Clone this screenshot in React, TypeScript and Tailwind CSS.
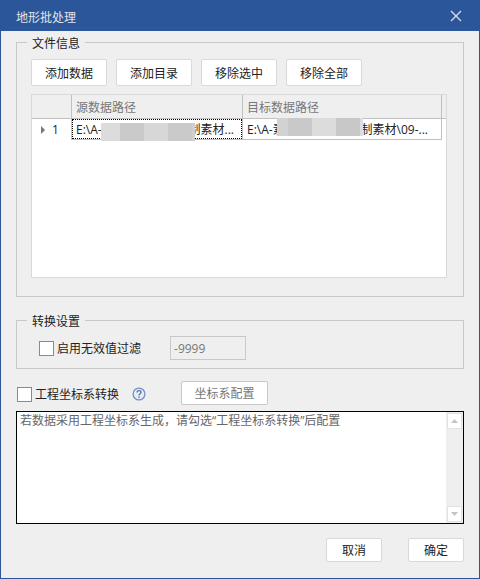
import { useState } from 'react';
import type { ButtonHTMLAttributes, ReactNode } from 'react';
import clsx from 'clsx';

const toolbar = ['添加数据', '添加目录', '移除选中', '移除全部'];

function Button({ className, ...props }: ButtonHTMLAttributes<HTMLButtonElement>) {
  return (
    <button
      type="button"
      className={clsx(
        'rounded-xs border bg-white pt-[2px] text-center hover:bg-gray-50 disabled:text-[#777777]',
        className
      )}
      {...props}
    />
  );
}

function Group({ title, className, children }: { title: string; className?: string; children: ReactNode }) {
  return (
    <fieldset className={clsx('min-w-0 border border-[#c8c8c8]', className)}>
      <legend className="ml-[10px] px-[5px] pt-1">{title}</legend>
      {children}
    </fieldset>
  );
}

function Checkbox({ id, label }: { id: string; label: string }) {
  return (
    <div className="flex items-center gap-[3px]">
      <input
        id={id}
        type="checkbox"
        className="size-[15px] appearance-none border border-[#8a8a8a] bg-white checked:bg-[#2b579a]"
      />
      <label htmlFor={id} className="pt-[2px]">{label}</label>
    </div>
  );
}

function SourceMask() {
  return (
    <span className="absolute top-[3px] left-7 flex h-[18px]">
      <span className="w-[19px] bg-[#dcdcdc]" />
      <span className="w-6 bg-[#cacaca]" />
      <span className="w-6 bg-[#d7d7d7]" />
      <span className="w-6 bg-[#cacaca]" />
      <span className="w-[3px] bg-[#cfcfcf]" />
    </span>
  );
}

function TargetMask() {
  return (
    <span className="absolute -top-px left-[34px] flex h-[18px]">
      <span className="w-[11px] bg-[#d2d2d2]" />
      <span className="w-6 bg-[#c9c9c9]" />
      <span className="w-6 bg-[#dcdcdc]" />
      <span className="w-6 bg-[#c8c8c8]" />
      <span className="w-[3px] bg-[#dddddd]" />
    </span>
  );
}

function PathTable() {
  return (
    <div className="mt-2 h-46 border border-[#d9d9d9] bg-white">
      <table className="w-full table-fixed border-separate border-spacing-0 text-left">
        <thead>
          <tr className="h-6 bg-[#efefef] text-[#777777]">
            <th className="w-10 border-r border-b border-[#c0c0c0] p-0" />
            <th className="w-[171px] border-r border-b border-[#c0c0c0] p-0 pt-[2px] pl-1 font-normal">源数据路径</th>
            <th className="border-r border-b border-[#c0c0c0] p-0 pt-[2px] pl-1 font-normal">目标数据路径</th>
            <th className="w-1 border-b border-[#c0c0c0] p-0" />
          </tr>
        </thead>
        <tbody>
          <tr className="h-[21px]">
            <td className="border-r border-[#c0c0c0] p-0">
              <div className="flex h-5 items-center gap-[6px] pl-2">
                <svg width="6" height="8" viewBox="0 0 6 8" fill="#777777">
                  <path d="M1 0 5 4 1 8z" />
                </svg>
                <span>1</span>
              </div>
            </td>
            <td className="border-r border-b border-[#c0c0c0] p-0">
              <div className="relative flex h-5 items-center justify-between border border-dotted border-black pt-[2px] pr-[7px] pl-[3px]">
                <span>E:\A-</span>
                <span>制素材...</span>
                <SourceMask />
              </div>
            </td>
            <td className="border-r border-b border-[#c0c0c0] p-0">
              <div className="relative flex h-5 items-center justify-between pt-[2px] pr-[13px] pl-1">
                <span>E:\A-素</span>
                <span>制素材\09-...</span>
                <TargetMask />
              </div>
            </td>
            <td className="p-0" />
          </tr>
        </tbody>
      </table>
    </div>
  );
}

function ScrollBar() {
  return (
    <div className="flex w-[17px] flex-col items-center justify-between bg-[#efefef] py-px">
      <button type="button" aria-label="向上" className="flex h-4 w-[15px] items-center justify-center border border-[#e2e2e2] bg-white">
        <svg width="7" height="4" viewBox="0 0 7 4" fill="#c4c4c4">
          <path d="M3.5 0 7 4H0z" />
        </svg>
      </button>
      <button type="button" aria-label="向下" className="flex h-4 w-[15px] items-center justify-center border border-[#e2e2e2] bg-white">
        <svg width="7" height="4" viewBox="0 0 7 4" fill="#c4c4c4">
          <path d="M3.5 4 7 0H0z" />
        </svg>
      </button>
    </div>
  );
}

export default function App() {
  const [note, setNote] = useState('若数据采用工程坐标系生成，请勾选“工程坐标系转换”后配置');

  return (
    <div className="flex min-h-screen flex-col border border-[#2b579a] bg-[#efefef] font-['Open_Sans','Noto_Sans_CJK_SC',sans-serif] text-xs leading-4 text-[#222222]">
      <header className="flex h-[30px] items-center justify-between bg-[#2b579a] pr-[17px] pl-[15px] text-[#e4e4e4]">
        <h1 className="pt-1">地形批处理</h1>
        <button type="button" aria-label="关闭">
          <svg width="12" height="12" viewBox="0 0 12 12" fill="none" stroke="#d8dfea" strokeWidth="1.3">
            <path d="M1 1 11 11M11 1 1 11" />
          </svg>
        </button>
      </header>

      <main className="flex flex-col px-[15px] pt-px pb-4">
        <Group title="文件信息">
          <div className="px-[14px] pt-[7px] pb-[18px]">
            <div className="flex gap-[9px]">
              {toolbar.map(label => (
                <Button key={label} className="h-[27px] w-[76px] border-[#d9d9d9]">
                  {label}
                </Button>
              ))}
            </div>
            <div className="pr-[2px]">
              <PathTable />
            </div>
          </div>
        </Group>

        <Group title="转换设置" className="mt-[13px]">
          <div className="flex items-center gap-[29px] px-[22px] pt-[6px] pb-2">
            <Checkbox id="filter" label="启用无效值过滤" />
            <input
              aria-label="无效值"
              defaultValue="-9999"
              disabled
              className="h-6 w-[76px] border border-[#c8c8c8] px-[3px] text-[#777777]"
            />
          </div>
        </Group>

        <div className="mt-3 flex items-center pl-px">
          <div className="flex items-center pt-[2px]">
            <Checkbox id="engineering" label="工程坐标系转换" />
            <button type="button" aria-label="帮助" className="ml-[13px]">
              <svg width="14" height="14" viewBox="0 0 14 14" fill="none" stroke="#5475b0">
                <circle cx="7" cy="7" r="5.9" fill="#e6ecf6" stroke="#7590c0" strokeWidth="1.3" />
                <path d="M5 5.4C5 3 9 3.1 9 5.4 9 6.8 7 6.7 7 8.5M7 9.4V10.9" strokeWidth="1.3" />
              </svg>
            </button>
          </div>
          <Button disabled className="ml-[35px] h-6 w-[87px] border-[#c8c8c8]">
            坐标系配置
          </Button>
        </div>

        <div className="mt-[6px] flex border border-black bg-white">
          <textarea
            aria-label="说明"
            value={note}
            onChange={e => setNote(e.target.value)}
            className="h-[111px] min-w-0 flex-1 resize-none overflow-hidden px-[3px] pt-px text-[#666666] outline-none"
          />
          <ScrollBar />
        </div>

        <div className="mt-[14px] flex justify-end gap-[26px]">
          <Button className="h-6 w-14 border-[#d9d9d9]">取消</Button>
          <Button className="h-6 w-14 border-[#d9d9d9]">确定</Button>
        </div>
      </main>
    </div>
  );
}
